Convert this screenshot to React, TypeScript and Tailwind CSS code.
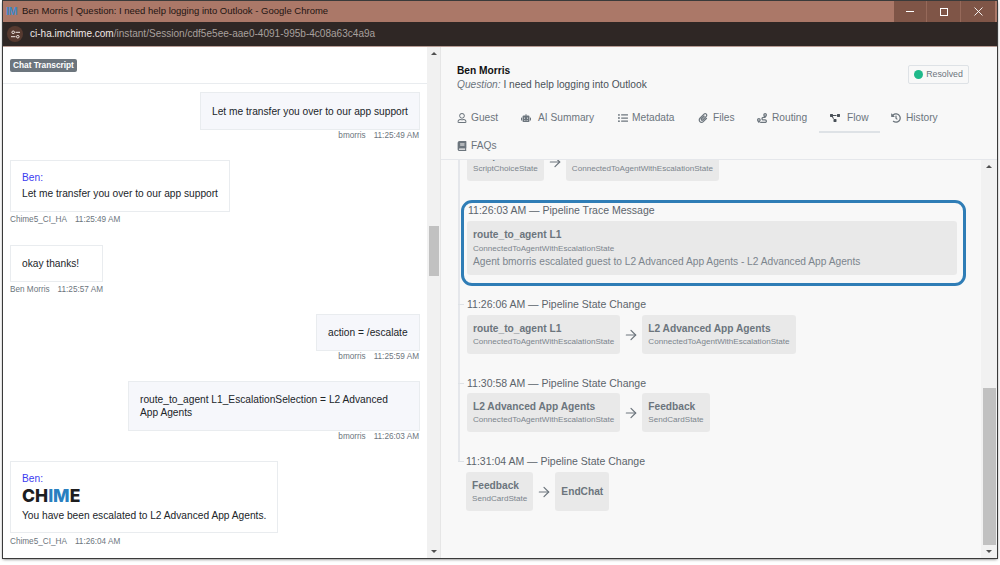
import React from 'react';
import { FaRegUser, FaRobot, FaListUl, FaPaperclip, FaRoute, FaProjectDiagram, FaHistory, FaBook } from 'react-icons/fa';
import { ArrowRight } from 'lucide-react';

function Meta({ who, time, right, cls }: { who: string; time: string; right?: boolean; cls?: string }) {
  return (
    <div className={`flex gap-[8px] text-[8.2px] leading-[10px] text-[#6c757d] ${right ? 'justify-end mt-px mr-px' : cls ?? 'mt-[3px]'}`}>
      <span>{who}</span>
      <span>{time}</span>
    </div>
  );
}

function Bubble({ children, cls }: { children: React.ReactNode; cls: string }) {
  return <div className={`border border-[#e9ecef] text-[10.2px] leading-[13px] text-[#212529] ${cls}`}>{children}</div>;
}

function Tab({ icon, label, active, cls }: { icon: React.ReactNode; label: string; active?: boolean; cls: string }) {
  return (
    <div className={`flex items-center text-[10.2px] text-[#6c757d] border-b-2 ${active ? 'border-[#dee2e6]' : 'border-transparent'} ${cls}`}>
      <span className={`w-[10px] flex justify-center text-[10px] ${active ? 'text-[#495057]' : 'text-[#6c757d]'}`}>{icon}</span>
      <span>{label}</span>
    </div>
  );
}

function StateBox({ title, sub }: { title: string; sub?: string }) {
  return (
    <div className="bg-[#e9e9e9] rounded-[3px] px-[6px] h-[39px] flex flex-col justify-center">
      <div className="text-[10.2px] leading-[13px] font-bold text-[#6c757d] whitespace-nowrap">{title}</div>
      {sub && <div className="text-[8.1px] leading-[11px] mt-[1px] text-[#7c858d] whitespace-nowrap">{sub}</div>}
    </div>
  );
}

function Arrow() {
  return (
    <div className="w-[22px] flex justify-center text-[#6c757d]">
      <ArrowRight size={16} strokeWidth={1.8} />
    </div>
  );
}

function Change({ time, a, b, cls, tick, gap }: { time: string; a: [string, string?]; b: [string, string?]; cls: string; tick: string; gap: string }) {
  return (
    <div className={`relative ${cls}`}>
      <div className={`absolute top-[6px] h-px w-[6px] bg-[#dee2e6] ${tick}`} />
      <div className="text-[10.5px] leading-[13px] text-[#5c646b]">{time}</div>
      <div className={`flex items-center ${gap}`}>
        <StateBox title={a[0]} sub={a[1]} />
        <Arrow />
        <StateBox title={b[0]} sub={b[1]} />
      </div>
    </div>
  );
}

function Scrollbar({ w, thumbTop, thumbH, thumbW, cls }: { w: string; thumbTop: string; thumbH: string; thumbW: string; cls: string }) {
  return (
    <div className={`shrink-0 bg-[#f1f1f1] flex flex-col items-center relative ${w} ${cls}`}>
      <div className="mt-[5px] w-0 h-0 border-x-[3px] border-x-transparent border-b-[3px] border-b-[#505050]" />
      <div className={`bg-[#c1c1c1] ${thumbTop} ${thumbH} ${thumbW}`} />
      <div className="mt-auto mb-[5px] w-0 h-0 border-x-[3px] border-x-transparent border-t-[3px] border-t-[#505050]" />
    </div>
  );
}

export default function App() {
  return (
    <div className="w-[1000px] h-[565px] bg-white pt-px pl-[3px] pr-[3px] pb-[7px] font-['Liberation_Sans',Arial,sans-serif] overflow-hidden">
      <div className="w-full h-full flex flex-col shadow-[0_1px_3px_rgba(0,0,0,0.7)] outline outline-1 outline-[#3a3a3a]">
        {/* title bar */}
        <div className="h-[21px] shrink-0 bg-[#ab7868] flex items-center">
          <span className="ml-[3px] w-[12px] text-[11px] font-bold leading-none text-[#3f87c7] tracking-[-0.5px]">IM</span>
          <span className="ml-[4px] text-[9.5px] text-[#1f1512]">Ben Morris | Question: I need help logging into Outlook - Google Chrome</span>
          <div className="ml-auto flex h-full mr-[2px] bg-[#7f5547] text-white">
            <div className="w-[33px] flex items-center justify-center border-r border-[#96695a]">
              <div className="w-[8px] h-px bg-white" />
            </div>
            <div className="w-[34px] flex items-center justify-center border-r border-[#96695a]">
              <div className="w-[8px] h-[8px] border border-white" />
            </div>
            <div className="w-[34px] flex items-center justify-center">
              <svg width="9" height="9" viewBox="0 0 9 9" stroke="white" strokeWidth="0.9"><path d="M0.5 0.5 L8.5 8.5 M8.5 0.5 L0.5 8.5" /></svg>
            </div>
          </div>
        </div>
        {/* address bar */}
        <div className="h-[25px] shrink-0 bg-[#2f2725] border-b border-[#b89c94] flex items-center">
          <div className="ml-[4px] w-[16px] h-[16px] rounded-full bg-[#573a30] flex items-center justify-center">
            <svg width="9" height="9" viewBox="0 0 9 9" fill="none" stroke="#f2e8e4" strokeWidth="1">
              <circle cx="2.2" cy="2.3" r="1.3" /><path d="M4.5 2.3H9" />
              <circle cx="6.8" cy="6.7" r="1.3" /><path d="M0 6.7H4.5" />
            </svg>
          </div>
          <span className="ml-[7px] text-[10.05px]">
            <span className="text-[#f0e8e5]">ci-ha.imchime.com</span>
            <span className="text-[#a8a09d]">/instant/Session/cdf5e5ee-aae0-4091-995b-4c08a63c4a9a</span>
          </span>
        </div>
        {/* body */}
        <div className="flex-1 flex min-h-0">
          {/* left */}
          <div className="w-[424px] shrink-0 bg-white flex flex-col min-h-0 overflow-hidden">
            <div className="h-[37px] shrink-0 border-b border-[#e9ecef] pl-[7px] pt-[12px]">
              <span className="block w-fit h-[13px] px-[3px] rounded-[2px] bg-[#6c757d] text-white font-bold text-[8.3px] leading-[13px]">Chat Transcript</span>
            </div>
            <div className="pl-[7px] pr-[7px] pt-[8px] flex flex-col flex-1">
              <div className="self-end flex flex-col">
                <Bubble cls="w-[220px] h-[38px] bg-[#f6f7fb] flex items-center pl-[11px]">Let me transfer you over to our app support</Bubble>
                <Meta who="bmorris" time="11:25:49 AM" right />
              </div>
              <div className="mt-[19px] w-fit">
                <Bubble cls="w-[220px] h-[52px] bg-white pl-[11px] pt-[10px]">
                  <div className="text-[#3b3bf0]">Ben:</div>
                  <div className="mt-[3px]">Let me transfer you over to our app support</div>
                </Bubble>
                <Meta who="Chime5_CI_HA" time="11:25:49 AM" />
              </div>
              <div className="mt-[20px] w-fit">
                <Bubble cls="w-[93px] h-[37px] bg-white flex items-center pl-[11px]">okay thanks!</Bubble>
                <Meta who="Ben Morris" time="11:25:57 AM" />
              </div>
              <div className="mt-[19px] self-end flex flex-col">
                <Bubble cls="w-[104px] h-[37px] bg-[#f6f7fb] flex items-center pl-[11px]">action = /escalate</Bubble>
                <Meta who="bmorris" time="11:25:59 AM" right />
              </div>
              <div className="mt-[19px] self-end flex flex-col">
                <Bubble cls="w-[292px] h-[50px] bg-[#f6f7fb] flex items-center px-[11px]">route_to_agent L1_EscalationSelection = L2 Advanced App Agents</Bubble>
                <Meta who="bmorris" time="11:26:03 AM" right />
              </div>
              <div className="mt-[19px] w-fit">
                <Bubble cls="w-[268px] h-[72px] bg-white pl-[11px] pt-[10px]">
                  <div className="text-[#3b3bf0]">Ben:</div>
                  <div className="mt-[2px] text-[17.5px] leading-[17px] font-extrabold text-[#1d1d1f] font-['Inter',sans-serif]">CH<span className="text-[#2a80c0]">IM</span>E</div>
                  <div className="mt-[5px]">You have been escalated to L2 Advanced App Agents.</div>
                </Bubble>
                <Meta who="Chime5_CI_HA" time="11:26:04 AM" cls="mt-[4px]" />
              </div>
            </div>
          </div>
          <Scrollbar w="w-[14px]" thumbTop="mt-[171px]" thumbH="h-[50px]" thumbW="w-[10px]" cls="border-r border-[#e6e6e6]" />
          {/* right */}
          <div className="flex-1 min-w-0 bg-[#f8f8f8] flex flex-col min-h-0">
            <div className="h-[113px] shrink-0 border-b border-[#e5e7eb] flex flex-col">
              <div className="flex justify-between pl-[16px] pr-[28px] pt-[17px] h-[57px] shrink-0">
                <div>
                  <div className="text-[10.2px] leading-[14px] font-bold text-[#111]">Ben Morris</div>
                  <div className="text-[10.2px] leading-[14px] text-[#4b5259]"><i className="text-[#6c757d]">Question:</i> I need help logging into Outlook</div>
                </div>
                <div className="mt-[1px] h-[19px] w-[61px] border border-[#dee2e6] rounded-[2px] flex items-center justify-center gap-[3px]">
                  <span className="w-[9px] h-[9px] rounded-full bg-[#1fb98a]" />
                  <span className="text-[8.8px] text-[#6c757d]">Resolved</span>
                </div>
              </div>
              <div className="flex pl-[10px] h-[29px] shrink-0">
                <Tab icon={<FaRegUser />} label="Guest" cls="gap-[4px] w-[64px] h-[29px] pl-[6px]" />
                <Tab icon={<FaRobot />} label="AI Summary" cls="gap-[7px] w-[97px] h-[29px] pl-[6px]" />
                <Tab icon={<FaListUl />} label="Metadata" cls="gap-[4px] w-[80px] h-[29px] pl-[6px]" />
                <Tab icon={<FaPaperclip />} label="Files" cls="gap-[5px] w-[59px] h-[29px] pl-[6px]" />
                <Tab icon={<FaRoute />} label="Routing" cls="gap-[5px] w-[68px] h-[29px] pl-[6px]" />
                <Tab icon={<FaProjectDiagram />} label="Flow" active cls="gap-[7px] w-[61px] h-[29px] pl-[11px]" />
                <Tab icon={<FaHistory />} label="History" cls="gap-[5px] w-[66px] h-[29px] pl-[11px]" />
              </div>
              <div className="flex pl-[10px] h-[27px] shrink-0">
                <Tab icon={<FaBook />} label="FAQs" cls="gap-[4px] w-[60px] h-[27px] pl-[6px]" />
              </div>
            </div>
            <div className="flex-1 flex min-h-0">
              <div className="flex-1 min-w-0 overflow-hidden relative pl-[26px]">
                <div className="absolute left-[17px] top-0 h-[302px] w-[2px] bg-[#e5e7eb]" />
                <div className="-mt-[18px] flex items-center">
                  <StateBox title="ScriptChoice" sub="ScriptChoiceState" />
                  <Arrow />
                  <StateBox title="Connected" sub="ConnectedToAgentWithEscalationState" />
                </div>
                <div className="relative -ml-[6px] mt-[19px] w-[505px] h-[86px] border-[3px] border-[#2f7db6] rounded-[11px] pl-[4px] pt-[1px] pr-[6px]">
                  <div className="text-[10.5px] leading-[13px] text-[#5c646b]">11:26:03 AM — Pipeline Trace Message</div>
                  <div className="mt-[4px] -ml-px h-[54px] bg-[#e9e9e9] rounded-[3px] px-[6px] pt-[7px]">
                    <div className="text-[10.2px] leading-[13px] font-bold text-[#6c757d]">route_to_agent L1</div>
                    <div className="text-[8.1px] leading-[11px] mt-[2px] text-[#7c858d]">ConnectedToAgentWithEscalationState</div>
                    <div className="text-[10.2px] leading-[13px] mt-[1px] text-[#7c858d]">Agent bmorris escalated guest to L2 Advanced App Agents - L2 Advanced App Agents</div>
                  </div>
                </div>
                <Change cls="mt-[12px]" gap="mt-[4px]" tick="-left-[9px]" time="11:26:06 AM — Pipeline State Change" a={['route_to_agent L1', 'ConnectedToAgentWithEscalationState']} b={['L2 Advanced App Agents', 'ConnectedToAgentWithEscalationState']} />
                <Change cls="mt-[23px]" gap="mt-[3px]" tick="-left-[9px]" time="11:30:58 AM — Pipeline State Change" a={['L2 Advanced App Agents', 'ConnectedToAgentWithEscalationState']} b={['Feedback', 'SendCardState']} />
                <Change cls="mt-[23px] -ml-px" gap="mt-[4px]" tick="-left-[8px]" time="11:31:04 AM — Pipeline State Change" a={['Feedback', 'SendCardState']} b={['EndChat']} />
              </div>
              <Scrollbar w="w-[16px]" thumbTop="mt-[220px]" thumbH="h-[157px]" thumbW="w-[13px]" cls="" />
            </div>
          </div>
        </div>
      </div>
    </div>
  );
}
